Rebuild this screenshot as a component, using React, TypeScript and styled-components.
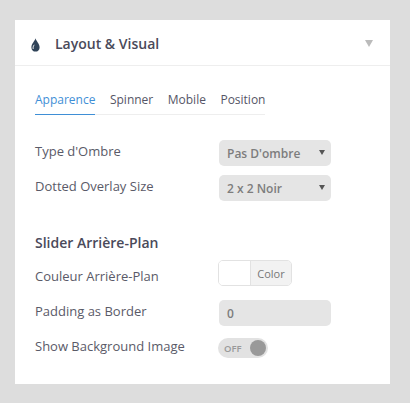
import React from 'react';
import styled, { createGlobalStyle } from 'styled-components';

const GlobalStyle = createGlobalStyle`
  html, body {
    margin: 0;
    padding: 0;
    background: #dddddd;
    font-family: 'Open Sans', 'Liberation Sans', sans-serif;
  }
`;

const tabs = ['Apparence', 'Spinner', 'Mobile', 'Position'];

const App: React.FC = () => {
  return (
    <Page>
      <GlobalStyle />
      <Panel>
        <Header>
          <DropIcon width="9" height="14" viewBox="0 0 9 14">
            <path
              d="M4.5 0.3C5 3 8.6 5.6 8.6 9.4C8.6 11.8 6.8 13.6 4.5 13.6C2.2 13.6 0.4 11.8 0.4 9.4C0.4 5.6 4 3 4.5 0.3Z"
              fill="#2f4358"
            />
            <path d="M3.2 6.8C2.2 8.2 1.8 9.6 2.2 11" stroke="#ffffff" strokeWidth="0.9" fill="none" />
          </DropIcon>
          <Title>Layout &amp; Visual</Title>
          <Caret />
        </Header>
        <Body>
          <TabBar>
            {tabs.map((tab, i) => (
              <Tab key={tab} active={i === 0}>
                {tab}
              </Tab>
            ))}
          </TabBar>
          <Row>
            <Label>Type d'Ombre</Label>
            <Select>
              Pas D'ombre
              <SelectArrow />
            </Select>
          </Row>
          <Row>
            <Label>Dotted Overlay Size</Label>
            <Select>
              2 x 2 Noir
              <SelectArrow />
            </Select>
          </Row>
          <SectionTitle>Slider Arrière-Plan</SectionTitle>
          <ColorRow>
            <ColorRowLabel>Couleur Arrière-Plan</ColorRowLabel>
            <ColorPicker>
              <Swatch />
              <ColorLabel>Color</ColorLabel>
            </ColorPicker>
          </ColorRow>
          <Row>
            <Label>Padding as Border</Label>
            <Input>0</Input>
          </Row>
          <SwitchRow>
            <SwitchLabel>Show Background Image</SwitchLabel>
            <Switch>
              <SwitchText>OFF</SwitchText>
              <Knob />
            </Switch>
          </SwitchRow>
        </Body>
      </Panel>
    </Page>
  );
};

const Page = styled.div`
  width: 410px;
  height: 403px;
  padding: 20px 20px 19px 15px;
  box-sizing: border-box;
  background: #dddddd;
  overflow: hidden;
`;

const Panel = styled.div`
  background: #ffffff;
  height: 364px;
`;

const Header = styled.div`
  height: 45px;
  display: flex;
  align-items: center;
  padding: 0 17px 0 16px;
  border-bottom: 1px solid #eeeeee;
`;

const DropIcon = styled.svg`
  flex: none;
  margin-right: 15px;
  margin-top: 4px;
`;

const Title = styled.div`
  flex: 1;
  font-size: 14px;
  font-weight: 600;
  color: #4a4a5a;
  padding-top: 2px;
`;

const Caret = styled.div`
  width: 0;
  height: 0;
  margin-top: 1px;
  border-left: 4px solid transparent;
  border-right: 4px solid transparent;
  border-top: 7px solid #bbbbbb;
`;

const Body = styled.div`
  padding: 24px 20px 0;
`;

const TabBar = styled.div`
  display: inline-flex;
  gap: 14.5px;
  border-bottom: 1px solid #eeeeee;
  margin-bottom: 25px;
  vertical-align: top;
`;

const Tab = styled.div<{ active?: boolean }>`
  font-size: 12px;
  line-height: 16px;
  padding: 2px 0 6px;
  margin-bottom: -1px;
  color: ${({ active }) => (active ? '#3f8fd6' : '#555566')};
  border-bottom: 1px solid ${({ active }) => (active ? '#3f8fd6' : 'transparent')};
`;

const Row = styled.div`
  display: flex;
  height: 35px;
`;

const Label = styled.div`
  width: 184px;
  flex: none;
  font-size: 13px;
  line-height: 18px;
  padding-top: 2px;
  color: #5a5a68;
`;

const Select = styled.div`
  position: relative;
  width: 112px;
  height: 26px;
  box-sizing: border-box;
  background: #e5e5e5;
  border-radius: 5px;
  padding-left: 8px;
  font-size: 12px;
  font-weight: 600;
  line-height: 28px;
  color: #7d7d7d;
`;

const SelectArrow = styled.span`
  position: absolute;
  right: 6px;
  top: 10px;
  width: 0;
  height: 0;
  border-left: 3px solid transparent;
  border-right: 3px solid transparent;
  border-top: 5px solid #555555;
`;

const SectionTitle = styled.div`
  font-size: 14px;
  font-weight: 600;
  line-height: 17px;
  color: #4a4a5a;
  margin: 24px 0 9px;
`;

const ColorRow = styled(Row)`
  height: 40px;
`;

const ColorRowLabel = styled(Label)`
  padding-top: 7px;
`;

const ColorPicker = styled.div`
  display: flex;
  width: 74px;
  height: 26px;
  box-sizing: border-box;
  margin: 0 0 0 -1px;
  border: 1px solid #e2e2e2;
  border-radius: 5px;
  overflow: hidden;
`;

const Swatch = styled.div`
  width: 31px;
  background: #ffffff;
  border-right: 1px solid #e2e2e2;
`;

const ColorLabel = styled.div`
  flex: 1;
  background: #f2f2f2;
  font-size: 11px;
  line-height: 26px;
  text-align: center;
  color: #777777;
`;

const Input = styled.div`
  width: 112px;
  height: 26px;
  box-sizing: border-box;
  background: #e5e5e5;
  border-radius: 5px;
  padding-left: 8px;
  font-size: 12px;
  font-weight: 600;
  line-height: 28px;
  color: #7d7d7d;
`;

const SwitchRow = styled(Row)`
  height: 20px;
  margin-top: 3px;
`;

const SwitchLabel = styled(Label)`
  margin-top: -1px;
  padding-top: 0;
`;

const Switch = styled.div`
  display: flex;
  align-items: center;
  justify-content: space-between;
  width: 50px;
  height: 20px;
  box-sizing: border-box;
  margin-left: -1px;
  padding: 0 2px 0 6px;
  background: #e2e2e2;
  border-radius: 10px;
`;

const SwitchText = styled.span`
  font-size: 9.5px;
  font-weight: 600;
  color: #999999;
`;

const Knob = styled.span`
  width: 16px;
  height: 16px;
  border-radius: 50%;
  background: #999999;
`;

export default App;
